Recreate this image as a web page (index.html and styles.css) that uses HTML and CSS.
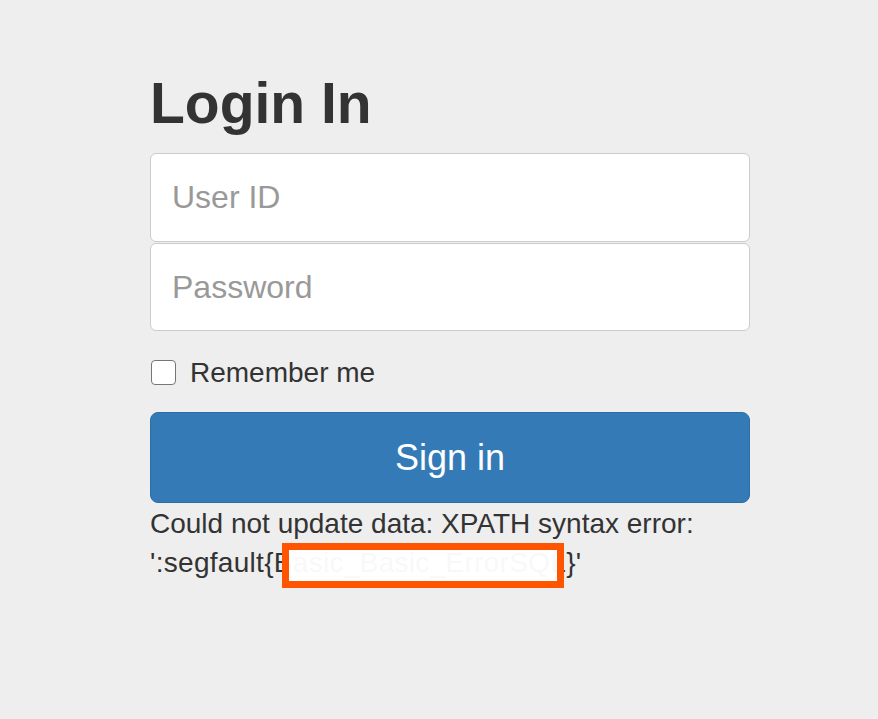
FILE: index.html
```html
<!DOCTYPE html>
<html lang="en">
<head>
<meta charset="utf-8">
<title>Login In</title>
<link rel="stylesheet" href="styles.css">
</head>
<body>
<div class="login">
  <h1 class="title">Login In</h1>
  <form class="form">
    <input class="field field-first" type="text" placeholder="User ID">
    <input class="field field-second" type="password" placeholder="Password">
    <label class="remember">
      <span class="check"></span>
      <span class="remember-text">Remember me</span>
    </label>
    <button class="btn" type="button">Sign in</button>
  </form>
  <div class="error">
    <div class="error-line">Could not update data: XPATH syntax error:</div>
    <div class="error-line error-detail">':segfault{Basic_Basic_ErrorSQL}'<div class="redact"></div></div>
  </div>
</div>
</body>
</html>
```
FILE: styles.css
```css
* { box-sizing: border-box; }
html, body {
  margin: 0;
  padding: 0;
  background: #eeeeee;
}
body {
  font-family: "Liberation Sans", Arial, Helvetica, sans-serif;
  color: #333333;
}
.login {
  width: 600px;
  margin-left: 150px;
  padding-top: 71px;
  padding-bottom: 40px;
}
.title {
  margin: 0;
  font-size: 57px;
  line-height: 64px;
  font-weight: 700;
  color: #333333;
}
.form {
  display: flex;
  flex-direction: column;
  margin-top: 18px;
}
.field {
  display: block;
  width: 600px;
  margin: 0;
  padding: 0 21px;
  border: 1px solid #cccccc;
  border-radius: 6px;
  background: #ffffff;
  font-family: "Liberation Sans", Arial, Helvetica, sans-serif;
  font-size: 32px;
  color: #555555;
  outline: none;
}
.field::placeholder { color: #999999; }
.field-first { height: 89px; }
.field-second { height: 88px; margin-top: 1px; }
.remember {
  display: flex;
  align-items: center;
  margin-top: 22px;
  height: 39px;
  font-size: 28px;
  line-height: 39px;
  color: #333333;
}
.check {
  width: 25px;
  height: 25px;
  margin-left: 1px;
  border: 1.5px solid #767676;
  border-radius: 4px;
  background: #ffffff;
  flex: none;
}
.remember-text { margin-left: 14px; }
.btn {
  margin-top: 20px;
  height: 91px;
  width: 600px;
  border: 1px solid #2e6da4;
  border-radius: 8px;
  background: #337ab7;
  color: #ffffff;
  font-family: "Liberation Sans", Arial, Helvetica, sans-serif;
  font-size: 36px;
  padding: 0;
}
.error {
  margin-top: 1px;
  font-size: 28px;
  line-height: 39px;
  color: #333333;
}
.error-line {
  position: relative;
  height: 39px;
}
.error-detail { letter-spacing: 0.3px; }
.redact {
  position: absolute;
  z-index: 2;
  left: 132px;
  top: 0;
  width: 282px;
  height: 45px;
  background: rgba(255, 255, 255, 0.97);
  box-shadow: inset 0 0 0 7px #ff5500;
}
```
